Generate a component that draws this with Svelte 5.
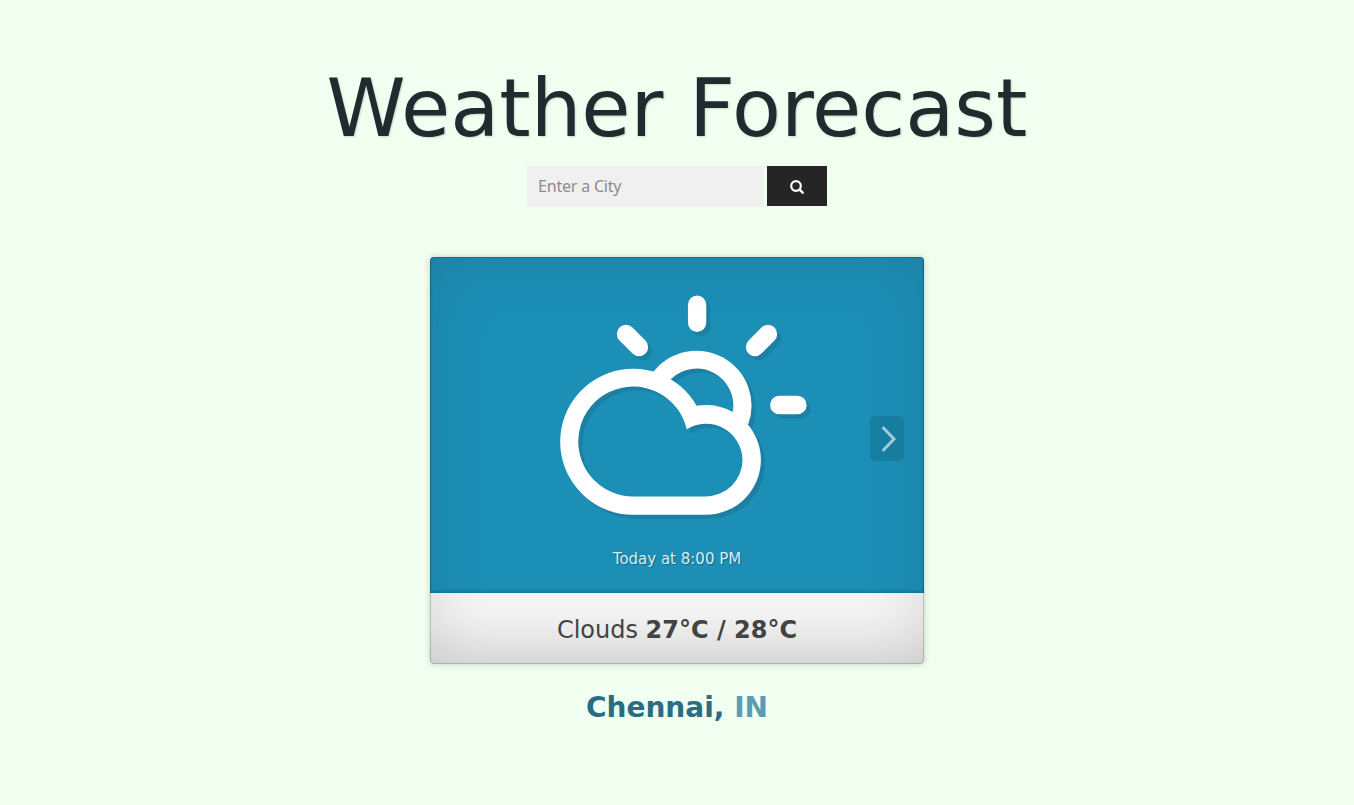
<script>
  let city = $state('');
  const forecast = { time: 'Today at 8:00 PM', sky: 'Clouds', range: '27°C / 28°C' };
</script>

<main>
  <h1>Weather Forecast</h1>

  <form onsubmit={(e) => e.preventDefault()}>
    <input type="text" placeholder="Enter a City" bind:value={city} />
    <button class="search" type="submit" aria-label="Search">
      <svg width="14" height="14" viewBox="0 0 14 14">
        <circle cx="6" cy="6" r="4.8" fill="none" stroke="#fff" stroke-width="2.2" />
        <path d="M9.6 9.6 12.7 12.7" stroke="#fff" stroke-width="2.4" stroke-linecap="round" />
      </svg>
    </button>
  </form>

  <section class="card">
    <div class="scene">
      <svg class="weather" width="260" height="230" viewBox="554.3 292.2 260 230">
        <g fill="#fff">
          <path fill-rule="evenodd" d="M633 515A73 73 0 1 1 697 406A55 55 0 0 1 761.2 460A55 55 0 0 1 706.2 515ZM633 496.6H706.2A36.6 36.6 0 0 0 742.8 460A36.6 36.6 0 0 0 687 429.5A54.9 54.9 0 1 0 633 496.6Z" />
          <path d="M654 371.4A55 55 0 0 1 748.5 424.8L740 418L733 412.2A36.7 36.7 0 0 0 671.3 379.2L670 384L652 376Z" />
        </g>
        <path class="rays" d="M697.4 304.8V323M779.5 405.2H797.8M626.3 334.2L639.3 347.2M768.3 334.2L755.3 347.2" />
      </svg>
      <p class="time">{forecast.time}</p>
      <button class="next" aria-label="Next forecast">
        <svg width="16" height="28" viewBox="0 0 16 28">
          <path d="M2.5 3 13 14 2.5 25" fill="none" stroke="#a4cfdf" stroke-width="3" stroke-linecap="round" stroke-linejoin="miter" />
        </svg>
      </button>
    </div>
    <div class="summary">{forecast.sky} <b>{forecast.range}</b></div>
  </section>

  <h2>Chennai, <span>IN</span></h2>
</main>

<style>
  :global(body) {
    background: #f0fff0;
    font-family: "DejaVu Sans", sans-serif;
  }
  main {
    display: flex;
    flex-direction: column;
    align-items: center;
    padding-top: 61px;
    min-height: 744px;
  }
  h1 {
    margin: 0;
    height: 105px;
    font-size: 80px;
    line-height: 96px;
    font-weight: 400;
    color: #202b30;
    text-shadow: 1px 1px 2px rgba(0, 0, 0, 0.15);
    white-space: nowrap;
  }
  form {
    display: flex;
    align-items: flex-start;
    gap: 3px;
    width: 300px;
  }
  input {
    box-sizing: border-box;
    width: 237px;
    height: 41px;
    border: 0;
    border-radius: 0;
    padding: 0 11px 2px;
    background: #f0f0f0;
    color: #444;
    font: 16px "Noto Sans", sans-serif;
    letter-spacing: -0.2px;
  }
  input::placeholder {
    color: #8c8c8c;
    opacity: 1;
  }
  button {
    display: flex;
    border: 0;
    padding: 0;
    align-items: center;
    justify-content: center;
  }
  .search {
    width: 60px;
    height: 40px;
    background: #252525;
    padding-top: 2px;
  }
  .card {
    position: relative;
    width: 494px;
    height: 407px;
    margin-top: 50px;
    border-radius: 4px;
    box-shadow: 0 0 6px rgba(0, 0, 0, 0.2);
    overflow: hidden;
  }
  .card::after {
    content: "";
    position: absolute;
    inset: 0;
    border-radius: 4px;
    pointer-events: none;
    box-shadow:
      inset 0 0 0 1px rgba(0, 0, 0, 0.17),
      inset 0 0 60px rgba(45, 45, 45, 0.15);
  }
  .scene {
    position: relative;
    display: flex;
    flex-direction: column;
    align-items: center;
    height: 336px;
    box-sizing: border-box;
    padding: 35px 0 0 14px;
    background: #1c8fb7;
    box-shadow: inset 0 -2px 3px rgba(0, 60, 85, 0.3);
  }
  .weather {
    display: block;
    filter: drop-shadow(4px 4px 0 #1b80a4);
  }
  .rays {
    fill: none;
    stroke: #fff;
    stroke-width: 18.3;
    stroke-linecap: round;
  }
  .time {
    margin: 26px 14px 0 0;
    font-size: 15px;
    line-height: 22px;
    color: #d8edf4;
    text-shadow: 1px 1px 1px rgba(0, 0, 0, 0.3);
  }
  .next {
    position: absolute;
    right: 20px;
    top: 159px;
    width: 34px;
    height: 45px;
    padding-left: 4px;
    border-radius: 5px;
    background: #177fa2;
  }
  .summary {
    height: 71px;
    padding-top: 1px;
    text-align: center;
    font-size: 24px;
    line-height: 72px;
    color: #444;
    background: linear-gradient(#f5f5f5, #f3f3f3 30%, #e5e5e5);
  }
  h2 {
    margin: 27px 0 0;
    font-size: 28px;
    line-height: 34px;
    font-weight: 700;
    color: #286d84;
  }
  h2 span {
    color: #589db5;
  }
</style>
